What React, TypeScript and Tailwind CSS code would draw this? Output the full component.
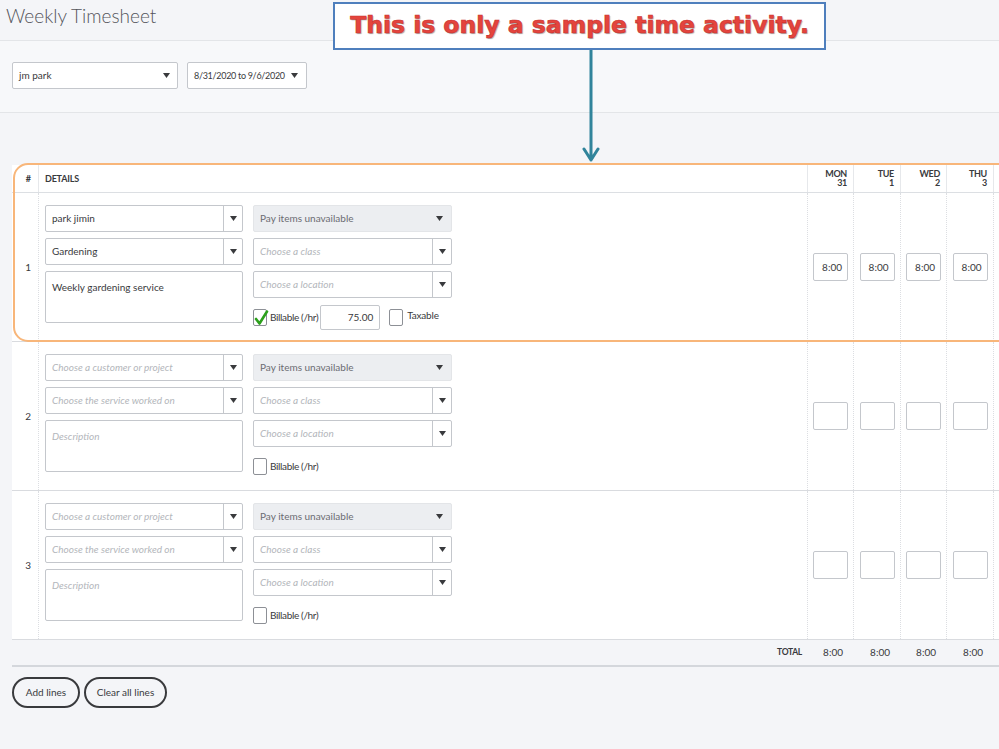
import clsx from "clsx";

/* ------------------------------------------------------------------ */
/*  Small pieces                                                       */
/* ------------------------------------------------------------------ */

const COLS =
  "grid grid-cols-[27px_769px_46px_47px_46px_47px_46px_47px_46px]";

const DAYS = [
  { d: "MON", n: "31" },
  { d: "TUE", n: "1" },
  { d: "WED", n: "2" },
  { d: "THU", n: "3" },
  { d: "FRI", n: "4" },
  { d: "SAT", n: "5" },
  { d: "SUN", n: "6" },
];

function Caret() {
  return (
    <svg width="7" height="5" viewBox="0 0 7 5" className="shrink-0">
      <path d="M0 0h7L3.5 5z" fill="#393a3d" />
    </svg>
  );
}

interface SelectProps {
  value?: string;
  placeholder?: string;
  disabled?: boolean;
  split?: boolean;
}

function Select({ value, placeholder, disabled, split = true }: SelectProps) {
  return (
    <div
      className={clsx(
        "flex h-[27px] items-stretch rounded-[2px] border",
        disabled ? "border-[#e3e5e8] bg-[#eceef1]" : "border-[#c4c7cc] bg-white"
      )}
    >
      <div
        className={clsx(
          "flex flex-1 items-center truncate pl-[6px] text-[10px]",
          disabled
            ? "text-[#6b6c72]"
            : value
            ? "text-[#393a3d]"
            : "italic text-[#b3b6bb]"
        )}
      >
        {value ?? placeholder}
      </div>
      <div
        className={clsx(
          "flex w-[19px] items-center justify-center",
          split ? "border-l border-[#c4c7cc]" : "mr-[2px]"
        )}
      >
        <Caret />
      </div>
    </div>
  );
}

function Checkbox({ checked }: { checked?: boolean }) {
  return (
    <div className="relative h-[17px] w-[14px] shrink-0 rounded-[2px] border border-[#8d9096] bg-white">
      {checked && (
        <svg
          width="15"
          height="16"
          viewBox="0 0 15 16"
          className="absolute left-[0px] top-[0px]"
        >
          <path
            d="M2 9l3.5 4.5L13 1.5"
            fill="none"
            stroke="#2ca01c"
            strokeWidth="2.6"
            strokeLinecap="round"
            strokeLinejoin="round"
          />
        </svg>
      )}
    </div>
  );
}

/* ------------------------------------------------------------------ */
/*  A timesheet line                                                   */
/* ------------------------------------------------------------------ */

interface LineProps {
  num: number;
  customer?: string;
  service?: string;
  description?: string;
  rate?: string;
  hours?: string[];
}

function Line({ num, customer, service, description, rate, hours }: LineProps) {
  const filled = !!customer;
  return (
    <div className={clsx(COLS, "h-[149px] border-b border-[#d9dbdf] bg-white")}>
      <div className="flex items-center justify-end border-r border-dotted border-[#dcdee2] pr-[7px] text-[10px] text-[#393a3d]">
        {num}
      </div>

      <div className="flex gap-[10px] border-r border-dotted border-[#dcdee2] pl-[6px] pt-[12px]">
        <div className="flex w-[198px] flex-col gap-[6px]">
          <Select value={customer} placeholder="Choose a customer or project" />
          <Select value={service} placeholder="Choose the service worked on" />
          <div
            className={clsx(
              "h-[52px] rounded-[2px] border border-[#c4c7cc] bg-white pl-[6px] pt-[8px] text-[10px] leading-[14px]",
              description ? "text-[#393a3d]" : "italic text-[#b3b6bb]"
            )}
          >
            {description ?? "Description"}
          </div>
        </div>

        <div className="flex w-[199px] flex-col gap-[6px]">
          <Select value="Pay items unavailable" disabled split={false} />
          <Select placeholder="Choose a class" />
          <Select placeholder="Choose a location" />
          <div className="mt-[1px] flex h-[25px] items-center text-[10px] text-[#393a3d]">
            <Checkbox checked={filled} />
            <span className="ml-[3px] tracking-[-0.35px]">Billable (/hr)</span>
            {filled && (
              <>
                <div className="ml-[2px] flex h-[25px] w-[60px] items-center justify-end rounded-[2px] border border-[#c4c7cc] pr-[6px]">
                  {rate}
                </div>
                <div className="ml-[9px]">
                  <Checkbox />
                </div>
                <span className="-mt-[4px] ml-[4px] tracking-[-0.2px]">Taxable</span>
              </>
            )}
          </div>
        </div>
      </div>

      {DAYS.map((day, i) => (
        <div
          key={day.d}
          className="flex items-center justify-center border-r border-dotted border-[#dcdee2]"
        >
          {i < 4 && (
            <div className="flex h-[28px] w-[35px] items-center justify-end rounded-[2px] border border-[#c4c7cc] bg-white pr-[5px] text-[10px] text-[#393a3d]">
              {hours?.[i]}
            </div>
          )}
        </div>
      ))}
    </div>
  );
}

/* ------------------------------------------------------------------ */
/*  Page                                                               */
/* ------------------------------------------------------------------ */

export default function App() {
  return (
    <div className="relative h-[749px] w-[999px] overflow-hidden bg-[#f4f5f8] font-['Lato','Noto_Sans',sans-serif] text-[#393a3d]">
      {/* Title */}
      <div className="h-[41px] border-b border-[#e3e5e8] pl-[6px] pt-[4px]">
        <h1 className="text-[19px] font-light leading-[24px] text-[#55565c]">
          Weekly Timesheet
        </h1>
      </div>

      {/* Filters */}
      <div className="flex h-[72px] gap-[9px] border-b border-[#e3e5e8] bg-[#f7f8fa] pl-[12px] pt-[21px]">
        <div className="flex h-[27px] w-[166px] items-center justify-between rounded-[2px] border border-[#c4c7cc] bg-white pl-[6px] pr-[7px] text-[10px]">
          <span>jm park</span>
          <Caret />
        </div>
        <div className="flex h-[27px] w-[120px] items-center justify-between rounded-[2px] border border-[#c4c7cc] bg-white pl-[6px] pr-[8px] text-[9px]">
          <span className="whitespace-nowrap tracking-[-0.3px]">8/31/2020 to 9/6/2020</span>
          <Caret />
        </div>
      </div>

      {/* Table */}
      <div className="ml-[12px] mt-[52px] w-max">
        <div className={clsx(COLS, "h-[28px] border-b border-[#dcdfe3] bg-white")}>
          <div className="flex items-center justify-end border-r border-[#e6e8eb] pr-[7px] text-[9px] font-bold">
            #
          </div>
          <div className="flex items-center border-r border-[#e6e8eb] pl-[6px] text-[9px] font-bold tracking-[-0.2px]">
            DETAILS
          </div>
          {DAYS.map((day) => (
            <div
              key={day.d}
              className="flex flex-col items-end justify-center border-r border-[#e6e8eb] pr-[6px] text-[9px] font-bold leading-[8.5px] tracking-[-0.3px]"
            >
              <span>{day.d}</span>
              <span>{day.n}</span>
            </div>
          ))}
        </div>

        <Line
          num={1}
          customer="park jimin"
          service="Gardening"
          description="Weekly gardening service"
          rate="75.00"
          hours={["8:00", "8:00", "8:00", "8:00"]}
        />
        <Line num={2} />
        <Line num={3} />

        <div className={clsx(COLS, "h-[27px] border-b-2 border-[#d4d7dc]")}>
          <div />
          <div className="flex items-center justify-end pr-[6px] text-[8.5px] font-bold tracking-[-0.3px]">
            TOTAL
          </div>
          {DAYS.map((day, i) => (
            <div
              key={day.d}
              className="flex items-center justify-end pr-[11px] text-[10px]"
            >
              {i < 4 ? "8:00" : ""}
            </div>
          ))}
        </div>
      </div>

      {/* Actions */}
      <div className="ml-[12px] mt-[10px] flex gap-[4px]">
        <button className="h-[31px] w-[68px] rounded-full border-2 border-[#393a3d] text-[10px] text-[#393a3d]">
          Add lines
        </button>
        <button className="h-[31px] w-[83px] rounded-full border-2 border-[#393a3d] text-[10px] text-[#393a3d]">
          Clear all lines
        </button>
      </div>

      {/* Annotation: highlight of line 1 */}
      <div className="pointer-events-none absolute left-[13px] top-[163px] h-[179px] w-[1100px] rounded-[15px] border-2 border-[#f8b67a]" />

      {/* Annotation: arrow */}
      <svg
        className="pointer-events-none absolute left-[580px] top-[48px]"
        width="24"
        height="116"
        viewBox="0 0 24 116"
      >
        <path
          d="M11 0V112M4 101l7 11l7-11"
          fill="none"
          stroke="#31849b"
          strokeWidth="3"
          strokeLinecap="round"
          strokeLinejoin="round"
        />
      </svg>

      {/* Annotation: callout */}
      <div className="absolute left-[333px] top-[2px] flex h-[48px] w-[493px] items-center justify-center border-2 border-[#4f7fbd] bg-white">
        <span className="font-['DejaVu_Sans',sans-serif] text-[23.5px] font-bold leading-none tracking-[0px] text-[#e4443d] [-webkit-text-stroke:0.6px_#c8302b] [text-shadow:1px_1px_1px_rgba(0,0,0,0.35)]">
          This is only a sample time activity.
        </span>
      </div>
    </div>
  );
}
